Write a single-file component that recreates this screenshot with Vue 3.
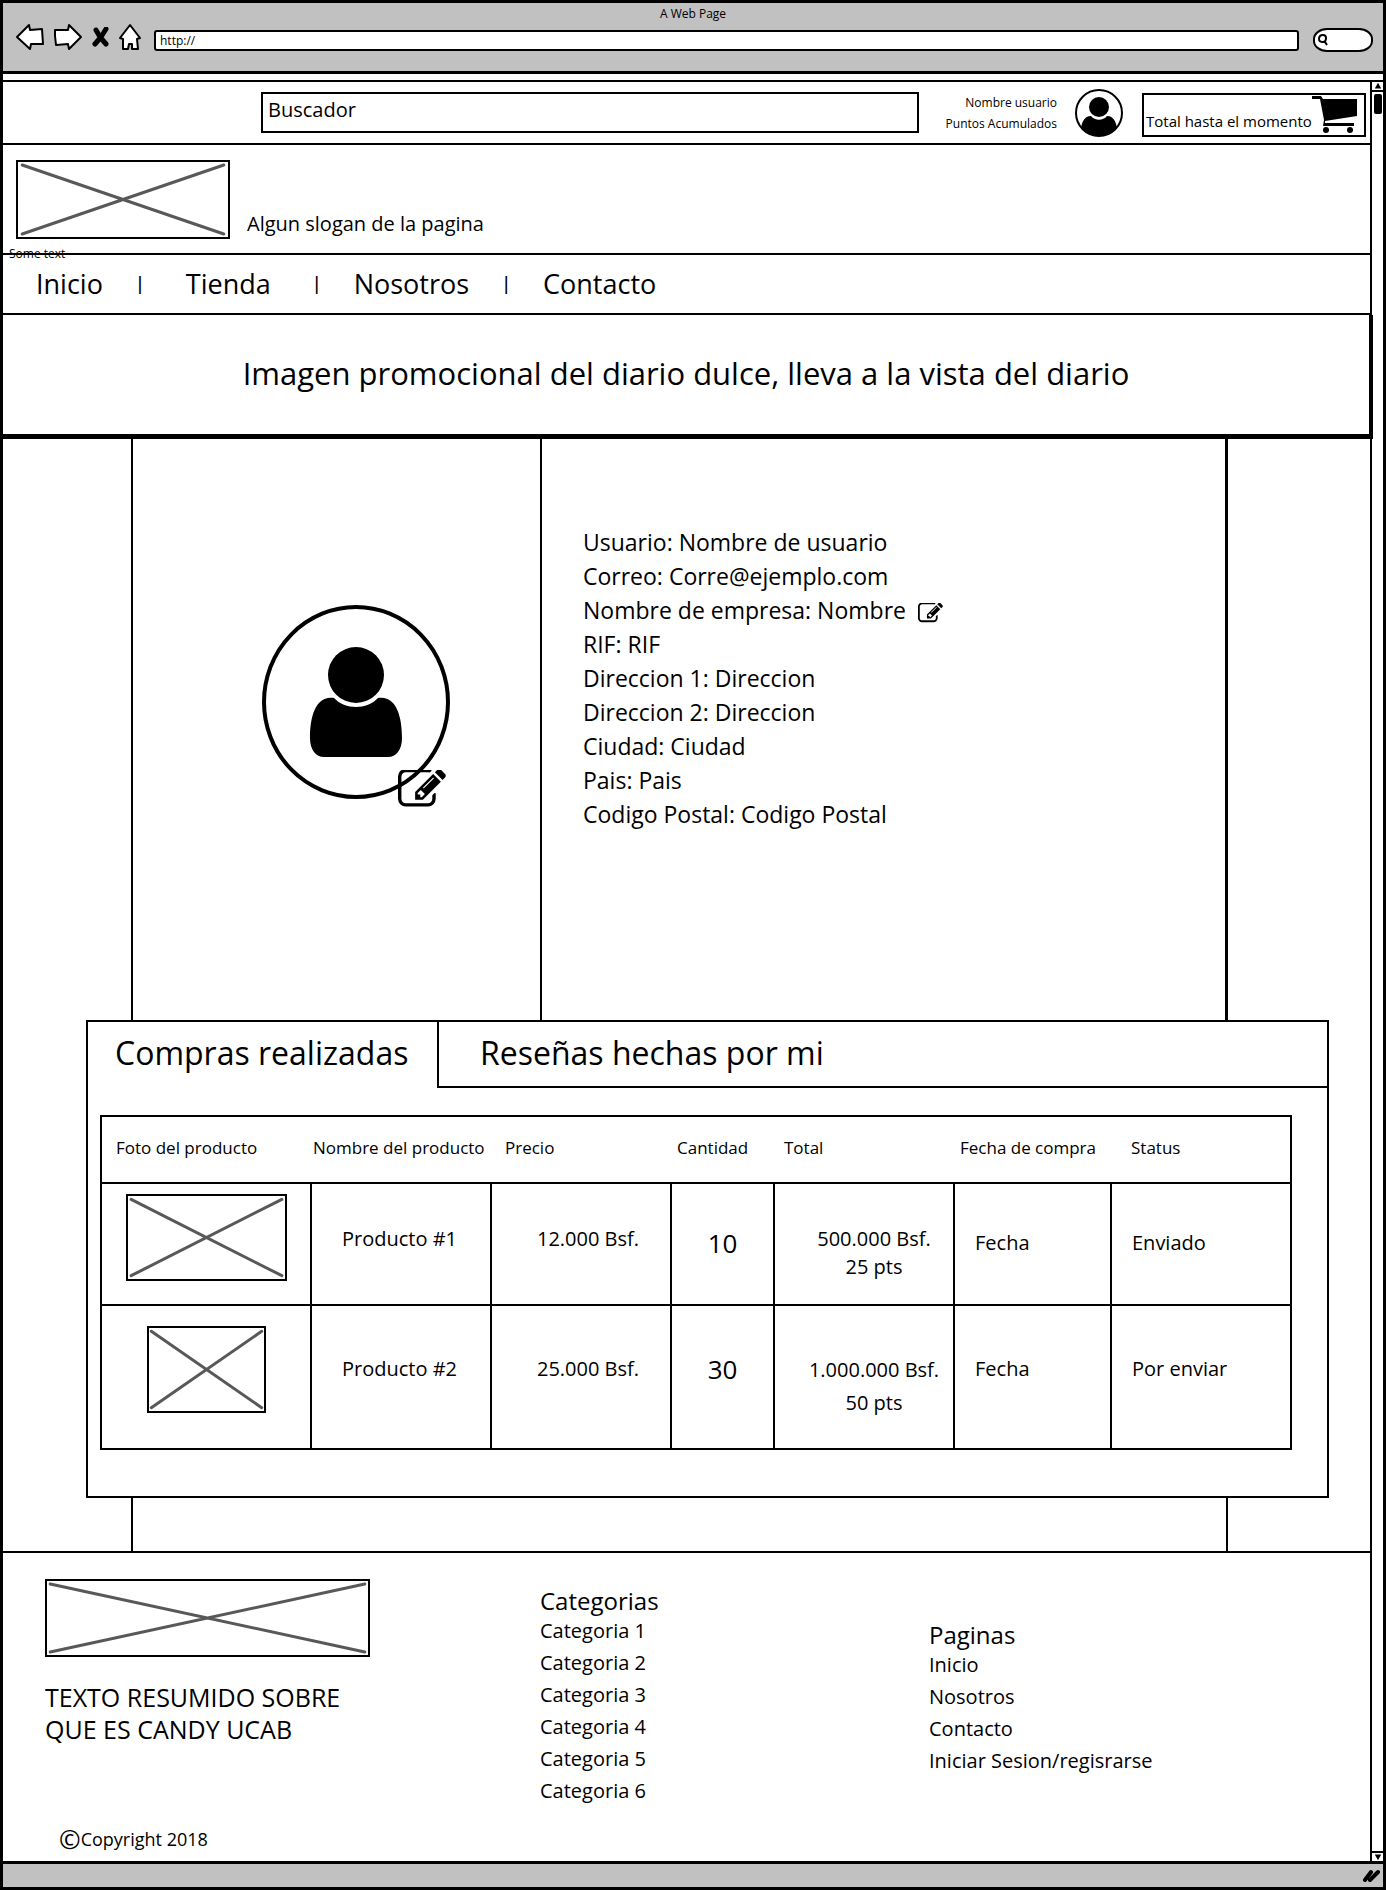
<script setup>
import { ref } from 'vue'

const editPath =
  'M888 1184l116-116-152-152-116 116v56h96v96h56zm440-720q-16-16-33 1l-350 350q-17 17-1 33t33-1l350-350q17-17 1-33zm80 594v190q0 119-84.500 203.500t-203.500 84.500h-832q-119 0-203.500-84.500t-84.500-203.500v-832q0-119 84.500-203.500t203.500-84.500h832q63 0 117 25 15 7 18 23 3 17-9 29l-49 49q-14 14-32 8-23-6-45-6h-832q-66 0-113 47t-47 113v832q0 66 47 113t113 47h832q66 0 113-47t47-113v-126q0-13 9-22l64-64q15-15 35-7t20 29zm-96-738l288 288-672 672h-288v-288zm444 132l-92 92-288-288 92-92q28-28 68-28t68 28l152 152q28 28 28 68t-28 68z'

const menu = ['Inicio', 'Tienda', 'Nosotros', 'Contacto']

const profile = [
  { label: 'Usuario', value: 'Nombre de usuario' },
  { label: 'Correo', value: 'Corre@ejemplo.com' },
  { label: 'Nombre de empresa', value: 'Nombre', editable: true },
  { label: 'RIF', value: 'RIF' },
  { label: 'Direccion 1', value: 'Direccion' },
  { label: 'Direccion 2', value: 'Direccion' },
  { label: 'Ciudad', value: 'Ciudad' },
  { label: 'Pais', value: 'Pais' },
  { label: 'Codigo Postal', value: 'Codigo Postal' },
]

const tabs = ['Compras realizadas', 'Reseñas hechas por mi']
const activeTab = ref(0)

const columns = [
  'Foto del producto',
  'Nombre del producto',
  'Precio',
  'Cantidad',
  'Total',
  'Fecha de compra',
  'Status',
]

const orders = [
  { name: 'Producto #1', price: '12.000 Bsf.', qty: 10, total: '500.000 Bsf.', points: '25 pts', date: 'Fecha', status: 'Enviado', size: 'wide' },
  { name: 'Producto #2', price: '25.000 Bsf.', qty: 30, total: '1.000.000 Bsf.', points: '50 pts', date: 'Fecha', status: 'Por enviar', size: 'narrow' },
]

const categories = [1, 2, 3, 4, 5, 6].map((n) => `Categoria ${n}`)
const pages = ['Inicio', 'Nosotros', 'Contacto', 'Iniciar Sesion/regisrarse']
</script>

<template>
  <div class="window">
    <header class="chrome">
      <div class="chrome-title">A Web Page</div>
      <div class="toolbar">
        <button class="tool back" aria-label="Atrás">
          <svg width="30" height="28" viewBox="0 0 30 28"><path d="M2 14 L14 2 L15 7 L27 6 L28 21 L16 21 L15 26 Z" /></svg>
        </button>
        <button class="tool forward" aria-label="Adelante">
          <svg width="30" height="28" viewBox="0 0 30 28"><path d="M28 14 L16 2 L15 7 L2 7 L2 13 L3 22 L15 21 L16 26 Z" /></svg>
        </button>
        <button class="tool stop" aria-label="Detener">
          <svg width="18" height="20" viewBox="0 0 18 20"><path class="cross" d="M4 3 L8 10 L14 17 M14 2 L9 10 L3 17" /></svg>
        </button>
        <button class="tool home" aria-label="Inicio">
          <svg width="24" height="28" viewBox="0 0 24 28"><path d="M12 2 L22 15 L19 16 L20 26 L14 26 L14 21 L11 21 L10 26 L5 26 L5 16 L2 15 Z" /></svg>
        </button>
        <input class="url" type="text" value="http://" aria-label="Dirección" />
        <label class="pill">
          <svg width="12" height="14" viewBox="0 0 12 14"><path d="M6 2 C3 2 2 4 2 6 C2 8 4 9 6 9 C8 9 9 7 9 5 C9 3 8 2 6 2 Z M8 9 L10 12" /></svg>
          <input type="search" aria-label="Buscar en la web" />
        </label>
      </div>
    </header>

    <div class="viewport">
      <div class="page">
        <div class="topbar">
          <input class="search" type="text" value="Buscador" aria-label="Buscador" />
          <div class="account">
            <span>Nombre usuario</span>
            <span>Puntos Acumulados</span>
          </div>
          <svg class="avatar-small" width="50" height="50" viewBox="0 0 50 50" role="img" aria-label="Usuario">
            <clipPath id="face"><circle cx="25" cy="25" r="23" /></clipPath>
            <circle cx="25" cy="25" r="23" fill="#fff" stroke="#000" stroke-width="2" />
            <g clip-path="url(#face)">
              <path d="M7 48 C6 35 10 28 17 28 C21 33 29 33 33 28 C40 28 44 35 43 48 Z" />
            </g>
            <ellipse cx="25" cy="19" rx="10" ry="10" />
          </svg>
          <a class="cart" href="#carrito">
            <span>Total hasta el momento</span>
            <svg width="46" height="38" viewBox="0 0 46 38" aria-hidden="true">
              <path d="M0 0 H9 L11 3 H45 V20 L13 25 L13 27 H42 V30 H11 L12 24 L8 3 H0 Z" />
              <circle cx="14" cy="34" r="3" /><circle cx="38" cy="34" r="3" />
            </svg>
          </a>
        </div>

        <div class="brand">
          <svg class="photo logo" role="img" aria-label="Logo" viewBox="0 0 100 100" preserveAspectRatio="none"><path d="M2 4 L98 96 M98 4 L2 96" /></svg>
          <p class="slogan">Algun slogan de la pagina</p>
          <span class="note">Some text</span>
        </div>

        <nav class="menu">
          <template v-for="(item, i) in menu" :key="item">
            <span v-if="i" class="bar">|</span>
            <a :class="{ roomy: i === 1 }" href="#">{{ item }}</a>
          </template>
        </nav>

        <a class="banner" href="#diario">Imagen promocional del diario dulce, lleva a la vista del diario</a>

        <section class="profile">
          <div class="portrait">
            <div class="portrait-frame">
              <svg width="190" height="196" viewBox="0 0 190 196" role="img" aria-label="Foto de perfil">
                <ellipse cx="95" cy="98" rx="92" ry="95" fill="#fff" stroke="#000" stroke-width="4" />
                <ellipse cx="95" cy="71" rx="28" ry="28" />
                <path d="M73 94 C84 106 106 106 117 94 C135 91 141 112 141 134 C141 146 135 153 127 153 H63 C55 153 49 146 49 134 C49 112 55 91 73 94 Z" />
              </svg>
              <button class="icon-btn edit-photo" aria-label="Editar foto">
                <svg width="48" height="38" viewBox="0 180 1792 1400"><path :d="editPath" /></svg>
              </button>
            </div>
          </div>
          <ul class="details">
            <li v-for="row in profile" :key="row.label">
              {{ row.label }}: {{ row.value }}
              <button v-if="row.editable" class="icon-btn edit-field" aria-label="Editar nombre de empresa">
                <svg width="25" height="20" viewBox="0 180 1792 1400"><path :d="editPath" /></svg>
              </button>
            </li>
          </ul>
        </section>

        <section class="panel">
          <div class="tabs" role="tablist">
            <button
              v-for="(tab, i) in tabs"
              :key="tab"
              class="tab"
              :class="{ active: i === activeTab }"
              role="tab"
              :aria-selected="i === activeTab"
              @click="activeTab = i"
            >{{ tab }}</button>
          </div>
          <table class="orders">
            <colgroup>
              <col class="c-photo" /><col class="c-wide" /><col class="c-wide" /><col class="c-qty" />
              <col class="c-wide" /><col class="c-date" /><col class="c-wide" />
            </colgroup>
            <thead>
              <tr><th v-for="c in columns" :key="c" scope="col">{{ c }}</th></tr>
            </thead>
            <tbody>
              <tr v-for="o in orders" :key="o.name" :class="o.size">
                <td class="photo-cell">
                  <svg class="photo" :class="o.size" role="img" :aria-label="o.name" viewBox="0 0 100 100" preserveAspectRatio="none"><path d="M2 4 L98 96 M98 4 L2 96" /></svg>
                </td>
                <td class="name">{{ o.name }}</td>
                <td class="price">{{ o.price }}</td>
                <td class="qty">{{ o.qty }}</td>
                <td class="total">{{ o.total }}<br />{{ o.points }}</td>
                <td class="plain">{{ o.date }}</td>
                <td class="plain">{{ o.status }}</td>
              </tr>
            </tbody>
          </table>
        </section>

        <div class="rails"></div>

        <footer class="footer">
          <div class="about">
            <svg class="photo footer-logo" role="img" aria-label="Logo" viewBox="0 0 100 100" preserveAspectRatio="none"><path d="M1 4 L99 96 M99 4 L1 96" /></svg>
            <p class="summary">TEXTO RESUMIDO SOBRE<br />QUE ES CANDY UCAB</p>
            <p class="copyright"><span class="mark">©</span>Copyright 2018</p>
          </div>
          <div class="links">
            <h2>Categorias</h2>
            <a v-for="c in categories" :key="c" href="#">{{ c }}</a>
          </div>
          <div class="links lower">
            <h2>Paginas</h2>
            <a v-for="p in pages" :key="p" href="#">{{ p }}</a>
          </div>
        </footer>
      </div>

      <div class="scrollbar" aria-hidden="true">
        <svg class="arrow up" width="12" height="10" viewBox="0 0 12 10"><path d="M6 1 L10 8 H2 Z" /></svg>
        <div class="thumb"></div>
        <svg class="arrow down" width="12" height="10" viewBox="0 0 12 10"><path d="M6 9 L10 2 H2 Z" /></svg>
      </div>
    </div>

    <div class="statusbar">
      <svg width="17" height="14" viewBox="0 0 17 14" aria-hidden="true"><path d="M2 11 L8 3 M7 11 L15 3" /></svg>
    </div>
  </div>
</template>

<style>
body {
  margin: 0;
  background: #fff;
}
</style>

<style scoped>
.window,
.window * {
  box-sizing: border-box;
}

.window {
  border: 3px solid #000;
  border-bottom-width: 4px;
  background: #fff;
  color: #000;
  font-family: 'Open Sans', 'Noto Sans', sans-serif;
  font-size: 20px;
}

input,
button {
  margin: 0;
  padding: 0;
  border: 0;
  border-radius: 0;
  outline: 0;
  background: none;
  color: inherit;
  font: inherit;
}

a {
  color: inherit;
  text-decoration: none;
}

p,
ul,
h2 {
  margin: 0;
  padding: 0;
  font-weight: 400;
  list-style: none;
}

svg {
  display: block;
  flex: none;
}

/* browser chrome */
.chrome {
  padding-bottom: 16px;
  border-bottom: 3px solid #000;
  background: #c1c1c1;
}

.chrome-title {
  font-size: 12px;
  line-height: 22px;
  text-align: center;
}

.toolbar {
  display: flex;
  align-items: center;
  height: 30px;
  padding: 0 10px 0 12px;
}

.tool {
  margin-bottom: 6px;
}

.tool path {
  fill: #fff;
  stroke: #000;
  stroke-width: 2;
  stroke-linejoin: round;
}

.tool .cross {
  fill: none;
  stroke-width: 5;
  stroke-linecap: round;
}

.forward {
  margin-left: 8px;
}

.stop {
  margin-left: 9px;
}

.home {
  margin-left: 8px;
}

.url {
  flex: 1;
  min-width: 0;
  height: 21px;
  margin: 0 14px 0 12px;
  padding-left: 4px;
  border: 2px solid #000;
  border-radius: 3px;
  background: #fff;
  font-size: 12px;
}

.pill {
  display: flex;
  align-items: center;
  width: 60px;
  height: 24px;
  padding-left: 2px;
  border: 2px solid #000;
  border-radius: 14px / 11px;
  background: #fff;
}

.pill path {
  fill: none;
  stroke: #000;
  stroke-width: 2;
}

.pill input {
  width: 40px;
}

/* viewport */
.viewport {
  display: flex;
  margin-top: 6px;
  border-top: 2px solid #000;
}

.page {
  flex: 1;
  min-width: 0;
}

.scrollbar {
  display: flex;
  flex-direction: column;
  width: 13px;
  border-left: 2px solid #000;
}

.arrow.up {
  border-bottom: 2px solid #000;
}

.arrow.down {
  margin-top: auto;
  border-top: 2px solid #000;
}

.thumb {
  width: 8px;
  height: 20px;
  margin: 2px 0 0 2px;
  border-radius: 2px;
  background: #000;
}

.topbar {
  display: flex;
  align-items: center;
  height: 63px;
  padding: 0 4px 0 258px;
  border-bottom: 2px solid #000;
}

.search {
  flex: 1;
  min-width: 0;
  height: 41px;
  padding: 0 0 6px 5px;
  border: 2px solid #000;
}

.account {
  display: flex;
  flex-direction: column;
  width: 138px;
  font-size: 12px;
  line-height: 21px;
  text-align: right;
}

.avatar-small {
  margin-left: 17px;
}

.cart {
  display: flex;
  align-items: flex-end;
  justify-content: space-between;
  width: 224px;
  height: 44px;
  margin: 4px 0 0 18px;
  padding: 0 7px 1px 2px;
  border: 2px solid #000;
  font-size: 15px;
  line-height: 26px;
  white-space: nowrap;
}

.brand {
  position: relative;
  display: flex;
  align-items: flex-end;
  gap: 17px;
  padding: 15px 13px 14px;
  border-bottom: 2px solid #000;
}

.photo {
  border: 2px solid #000;
}

.photo path {
  fill: none;
  stroke: #585858;
  stroke-width: 3;
  stroke-linecap: round;
  vector-effect: non-scaling-stroke;
}

.logo {
  width: 214px;
  height: 79px;
}

.slogan {
  line-height: 30px;
}

.note {
  position: absolute;
  bottom: -9px;
  left: 6px;
  font-size: 12px;
  line-height: 16px;
}

.menu {
  display: flex;
  align-items: center;
  gap: 32px;
  height: 60px;
  padding: 0 0 2px 33px;
  border-bottom: 2px solid #000;
  font-size: 27px;
}

.menu .bar {
  font-size: 18px;
  font-weight: 600;
}

.menu .roomy {
  margin: 0 9px;
}

.banner {
  display: flex;
  align-items: center;
  justify-content: center;
  height: 124px;
  margin-right: -3px;
  padding-bottom: 3px;
  border-right: 4px solid #000;
  border-bottom: 5px solid #000;
  font-size: 31px;
  text-align: center;
}

/* profile */
.profile,
.rails {
  margin: 0 142px 0 128px;
  border: solid #000;
  border-width: 0 2px;
}

.profile {
  display: flex;
  border-right-width: 3px;
}

.rails {
  height: 53px;
}

.portrait {
  width: 409px;
  padding: 165px 0 220px 128px;
  border-right: 2px solid #000;
}

.portrait-frame {
  position: relative;
  width: 190px;
}

.icon-btn {
  cursor: pointer;
}

.edit-photo {
  position: absolute;
  right: 5px;
  bottom: -8px;
}

.edit-field {
  padding-top: 5px;
}

.details {
  flex: 1;
  padding: 86px 0 0 41px;
  font-size: 23px;
  line-height: 34px;
}

.details li {
  display: flex;
  align-items: center;
  gap: 12px;
}

/* orders panel */
.panel {
  margin: 0 41px 0 83px;
  padding-bottom: 46px;
  border: 2px solid #000;
}

.tabs {
  display: flex;
  height: 66px;
}

.tab {
  flex: 1;
  padding: 0 0 4px 41px;
  border: solid #000;
  border-width: 0 0 2px 2px;
  font-size: 32px;
  text-align: left;
}

.tab.active {
  flex: none;
  width: 349px;
  padding: 0 0 6px 27px;
  border-width: 0;
}

.orders {
  width: calc(100% - 48px);
  margin: 27px 36px 0 12px;
  border: 2px solid #000;
  border-collapse: collapse;
  table-layout: fixed;
}

.c-photo {
  width: 210px;
}

.c-wide {
  width: 180px;
}

.c-qty {
  width: 103px;
}

.c-date {
  width: 157px;
}

.orders th {
  height: 67px;
  padding: 0 0 4px 14px;
  font-size: 17px;
  font-weight: 400;
  text-align: left;
  white-space: nowrap;
}

.orders th:nth-child(2) {
  padding-left: 2px;
}

.orders th:nth-child(4),
.orders th:nth-child(6) {
  padding-left: 6px;
}

.orders th:nth-child(5) {
  padding-left: 10px;
}

.orders th:nth-child(7) {
  padding-left: 20px;
}

.orders td {
  height: 122px;
  padding: 0 0 2px;
  border: 2px solid #000;
  line-height: 28px;
}

.orders .narrow td {
  height: 144px;
  padding-bottom: 16px;
}

.orders .wide .photo-cell {
  padding-bottom: 14px;
}

.orders td.name {
  padding-left: 30px;
}

.orders td.price {
  padding-left: 14px;
  text-align: center;
}

.orders .wide .name,
.orders .wide .price {
  padding-bottom: 10px;
}

.orders td.qty {
  font-size: 26px;
  text-align: center;
}

.orders td.total {
  padding: 18px 0 0 20px;
  text-align: center;
}

.orders .narrow .total {
  line-height: 33px;
}

.orders td.plain {
  padding-left: 20px;
}

.orders .photo {
  height: 87px;
  margin: 0 auto;
}

.photo.wide {
  width: 161px;
}

.photo.narrow {
  width: 119px;
}

/* footer */
.footer {
  display: grid;
  grid-template-columns: 495fr 389fr 441fr;
  padding: 26px 0 9px 42px;
  border-top: 2px solid #000;
}

.footer-logo {
  width: 325px;
  height: 78px;
}

.summary {
  margin-top: 24px;
  font-size: 25px;
  line-height: 32px;
}

.copyright {
  display: flex;
  align-items: center;
  margin: 81px 0 0 14px;
  font-size: 18px;
  line-height: 26px;
}

.mark {
  font-size: 26px;
}

.links {
  display: flex;
  flex-direction: column;
  align-items: flex-start;
  padding-top: 8px;
  line-height: 32px;
}

.links.lower {
  padding-top: 42px;
}

.links h2 {
  font-size: 24px;
  line-height: 28px;
}

.statusbar {
  display: flex;
  justify-content: flex-end;
  align-items: center;
  height: 26px;
  padding-right: 3px;
  border-top: 3px solid #000;
  background: #c1c1c1;
}

.statusbar path {
  fill: none;
  stroke: #000;
  stroke-width: 4;
  stroke-linecap: round;
}
</style>
